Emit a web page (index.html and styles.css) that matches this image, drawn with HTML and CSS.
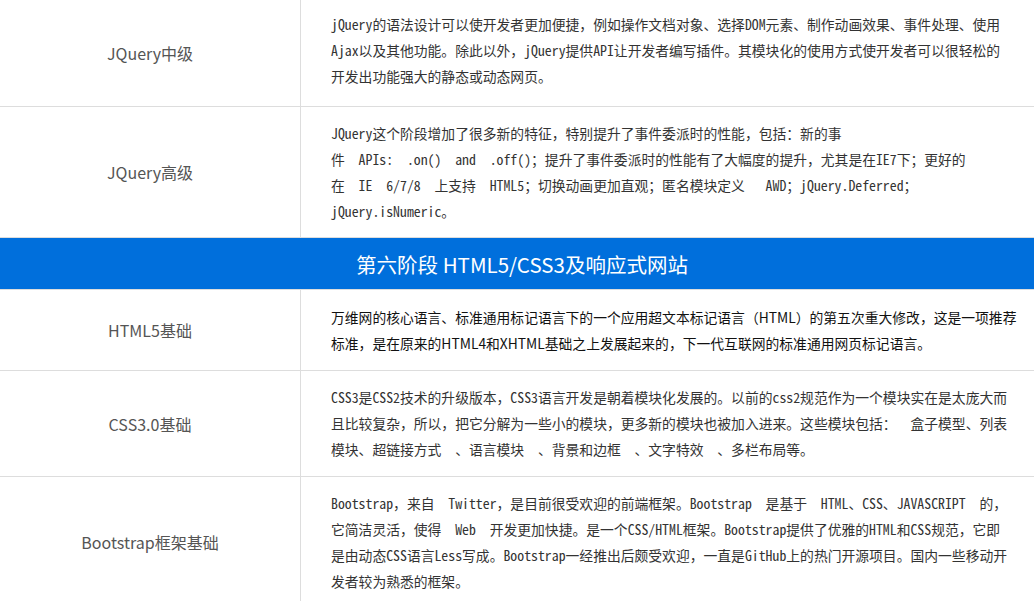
FILE: index.html
```html
<!DOCTYPE html>
<html lang="zh-CN">
<head>
<meta charset="utf-8">
<title>课程大纲</title>
<link rel="stylesheet" href="styles.css">
</head>
<body>
<div class="course-table">
  <div class="row row-first">
    <div class="name">JQuery中级</div>
    <div class="desc">jQuery的语法设计可以使开发者更加便捷，例如操作文档对象、选择DOM元素、制作动画效果、事件处理、使用Ajax以及其他功能。除此以外，jQuery提供API让开发者编写插件。其模块化的使用方式使开发者可以很轻松的开发出功能强大的静态或动态网页。</div>
  </div>
  <div class="row">
    <div class="name">JQuery高级</div>
    <div class="desc">JQuery这个阶段增加了很多新的特征，特别提升了事件委派时的性能，包括：新的事件&nbsp;&nbsp;APIs:&nbsp;&nbsp;.on()&nbsp;&nbsp;and&nbsp;&nbsp;.off()；提升了事件委派时的性能有了大幅度的提升，尤其是在IE7下；更好的在&nbsp;&nbsp;IE&nbsp;&nbsp;6/7/8&nbsp;&nbsp;上支持&nbsp;&nbsp;HTML5；切换动画更加直观；匿名模块定义&nbsp;&nbsp;&nbsp;AWD；jQuery.Deferred；jQuery.isNumeric。</div>
  </div>
  <div class="stage">第六阶段 HTML5/CSS3及响应式网站</div>
  <div class="row">
    <div class="name">HTML5基础</div>
    <div class="desc desc-html5">万维网的核心语言、标准通用标记语言下的一个应用超文本标记语言（HTML）的第五次重大修改，这是一项推荐标准，是在原来的HTML4和XHTML基础之上发展起来的，下一代互联网的标准通用网页标记语言。</div>
  </div>
  <div class="row">
    <div class="name">CSS3.0基础</div>
    <div class="desc desc-css3">CSS3是CSS2技术的升级版本，CSS3语言开发是朝着模块化发展的。以前的css2规范作为一个模块实在是太庞大而且比较复杂，所以，把它分解为一些小的模块，更多新的模块也被加入进来。这些模块包括：&nbsp; 盒子模型、列表模块、超链接方式&nbsp; 、语言模块&nbsp; 、背景和边框&nbsp; 、文字特效&nbsp; 、多栏布局等。</div>
  </div>
  <div class="row">
    <div class="name">Bootstrap框架基础</div>
    <div class="desc">Bootstrap，来自&nbsp; Twitter，是目前很受欢迎的前端框架。Bootstrap&nbsp; 是基于&nbsp; HTML、CSS、JAVASCRIPT&nbsp; 的，它简洁灵活，使得&nbsp; Web&nbsp; 开发更加快捷。是一个CSS/HTML框架。Bootstrap提供了优雅的HTML和CSS规范，它即是由动态CSS语言Less写成。Bootstrap一经推出后颇受欢迎，一直是GitHub上的热门开源项目。国内一些移动开发者较为熟悉的框架。</div>
  </div>
</div>
</body>
</html>
```

FILE: styles.css
```css
html, body {
  background: #fff;
}
body {
  margin: 0;
  font-family: "Noto Sans CJK SC", "Noto Sans", sans-serif;
}
.course-table {
  width: 1034px;
}
.row {
  display: grid;
  grid-template-columns: 301px 1fr;
  border-bottom: 1px solid #ddd;
}
.name {
  border-right: 1px solid #ddd;
  display: flex;
  align-items: center;
  justify-content: center;
  font-size: 16px;
  color: #555;
}
.desc {
  padding: 13px 24px 13px 30px;
  font-family: "Noto Sans Mono CJK SC", "Noto Sans CJK SC", monospace;
  font-size: 13.8px;
  line-height: 26px;
  color: #333;
}
.row-first .desc {
  padding-top: 11px;
  padding-bottom: 17px;
}
.desc-html5 {
  padding-top: 14px;
  padding-right: 13px;
  padding-bottom: 14px;
  font-family: "Noto Sans CJK SC", sans-serif;
  color: #111;
}
.desc-css3 {
  padding-top: 13px;
  padding-bottom: 14px;
}
.stage {
  height: 51px;
  display: flex;
  align-items: center;
  justify-content: center;
  padding-left: 10px;
  background: #006fdc;
  color: #fff;
  font-size: 20.5px;
  border-bottom: 1px solid #ddd;
}
```
